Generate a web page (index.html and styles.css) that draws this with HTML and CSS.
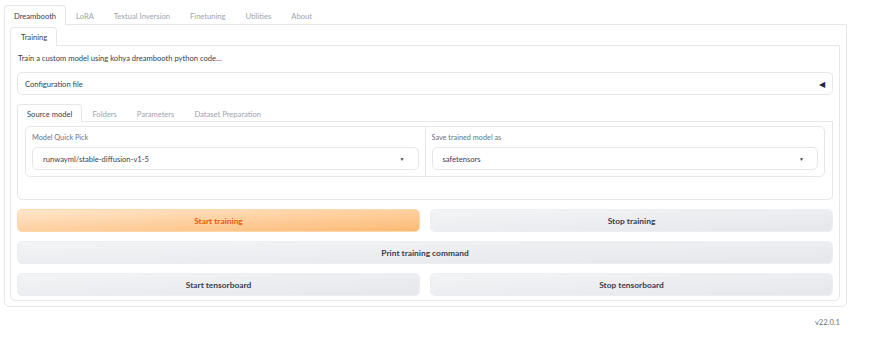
FILE: index.html
```html
<!DOCTYPE html>
<html lang="en">
<head>
<meta charset="utf-8">
<title>Kohya Dreambooth</title>
<link rel="stylesheet" href="styles.css">
</head>
<body>
<div class="app">
  <div class="tabs-nav">
    <div class="tab selected">Dreambooth</div>
    <div class="tab">LoRA</div>
    <div class="tab">Textual Inversion</div>
    <div class="tab">Finetuning</div>
    <div class="tab">Utilities</div>
    <div class="tab">About</div>
  </div>
  <div class="panel">
    <div class="tabs-nav sub">
      <div class="tab selected">Training</div>
    </div>
    <div class="panel inner">
      <p class="desc">Train a custom model using kohya dreambooth python code…</p>
      <div class="accordion">
        <span>Configuration file</span>
        <span class="acc-icon">◀</span>
      </div>
      <div class="subtabs">
        <div class="tabs-nav sub2">
          <div class="tab selected">Source model</div>
          <div class="tab">Folders</div>
          <div class="tab">Parameters</div>
          <div class="tab">Dataset Preparation</div>
        </div>
        <div class="tab-body">
          <div class="form-row">
            <div class="field">
              <div class="label">Model Quick Pick</div>
              <div class="select"><span>runwayml/stable-diffusion-v1-5</span><span class="caret">▼</span></div>
            </div>
            <div class="field">
              <div class="label">Save trained model as</div>
              <div class="select"><span>safetensors</span><span class="caret">▼</span></div>
            </div>
          </div>
        </div>
      </div>
      <div class="btn-row">
        <button class="btn primary">Start training</button>
        <button class="btn">Stop training</button>
      </div>
      <div class="btn-row">
        <button class="btn">Print training command</button>
      </div>
      <div class="btn-row">
        <button class="btn">Start tensorboard</button>
        <button class="btn">Stop tensorboard</button>
      </div>
    </div>
  </div>
  <div class="footer">v22.0.1</div>
</div>
</body>
</html>
```
FILE: styles.css
```css
* { box-sizing: border-box; }
html, body { margin: 0; padding: 0; background: #ffffff; }
body {
  font-family: Lato, "Open Sans", "Liberation Sans", sans-serif;
  font-size: 7.6px;
  color: #374151;
}
.app {
  width: 843px;
  margin-left: 4px;
  padding-top: 5px;
}
.tabs-nav {
  display: flex;
  height: 19px;
  align-items: stretch;
}
.tab {
  display: flex;
  align-items: center;
  padding: 0 9px;
  color: #9ca3af;
  border: 1px solid transparent;
  border-bottom: none;
  border-radius: 4px 4px 0 0;
  margin-bottom: -1px;
  position: relative;
  z-index: 1;
}
.tab.selected {
  color: #374151;
  background: #fff;
  border-color: #e5e7eb;
}
.panel {
  border: 1px solid #e5e7eb;
  border-radius: 0 0 5px 5px;
  padding: 2px 6px 5px 5px;
}
.tabs-nav.sub { height: 18px; }
.tabs-nav.sub .tab { padding: 0 9px 0 10px; }
.panel.inner {
  padding: 6px 6px 4px 6px;
  display: flex;
  flex-direction: column;
  gap: 9px;
}
.desc {
  margin: 0;
  line-height: 12px;
  padding-left: 1px;
  margin-bottom: -1px;
}
.accordion {
  height: 23px;
  border: 1px solid #e5e7eb;
  border-radius: 5px;
  display: flex;
  align-items: center;
  justify-content: space-between;
  padding: 0 7px 0 7px;
}
.acc-icon { color: #1e293b; font-size: 8px; }
.subtabs { display: flex; flex-direction: column; }
.tabs-nav.sub2 { height: 17px; }
.tabs-nav.sub2 .tab { padding: 0 9px 0 9px; }
.tab-body {
  border: 1px solid #e5e7eb;
  border-radius: 0 0 5px 5px;
  padding: 4px 7px 22px 7px;
}
.form-row {
  display: flex;
  border: 1px solid #e5e7eb;
  border-radius: 5px;
}
.field {
  flex: 1;
  padding: 5px 6px 6px 6px;
}
.field + .field { border-left: 1px solid #e5e7eb; }
.label {
  color: #6b7280;
  font-size: 7.3px;
  line-height: 12px;
  margin-bottom: 3px;
}
.select {
  height: 23px;
  border: 1px solid #e5e7eb;
  border-radius: 5px;
  display: flex;
  align-items: center;
  justify-content: space-between;
  padding: 0 13px 0 10px;
  color: #374151;
  background: #fff;
}
.caret { font-size: 5px; color: #374151; }
.btn-row {
  display: flex;
  gap: 10px;
}
.btn {
  flex: 1;
  height: 23px;
  border: 1px solid #eceef1;
  border-radius: 5px;
  font-family: inherit;
  font-size: 8.4px;
  font-weight: 700;
  color: #374151;
  background: linear-gradient(to bottom right, #f3f4f6, #e5e7eb);
  padding: 0;
}
.btn.primary {
  color: #ea580c;
  border-color: #fed7aa;
  background: linear-gradient(to bottom right, #ffe6cc, #fdba74);
}
.footer {
  text-align: right;
  padding-right: 7px;
  margin-top: 10px;
  color: #6b7280;
  font-size: 7.6px;
}
```
